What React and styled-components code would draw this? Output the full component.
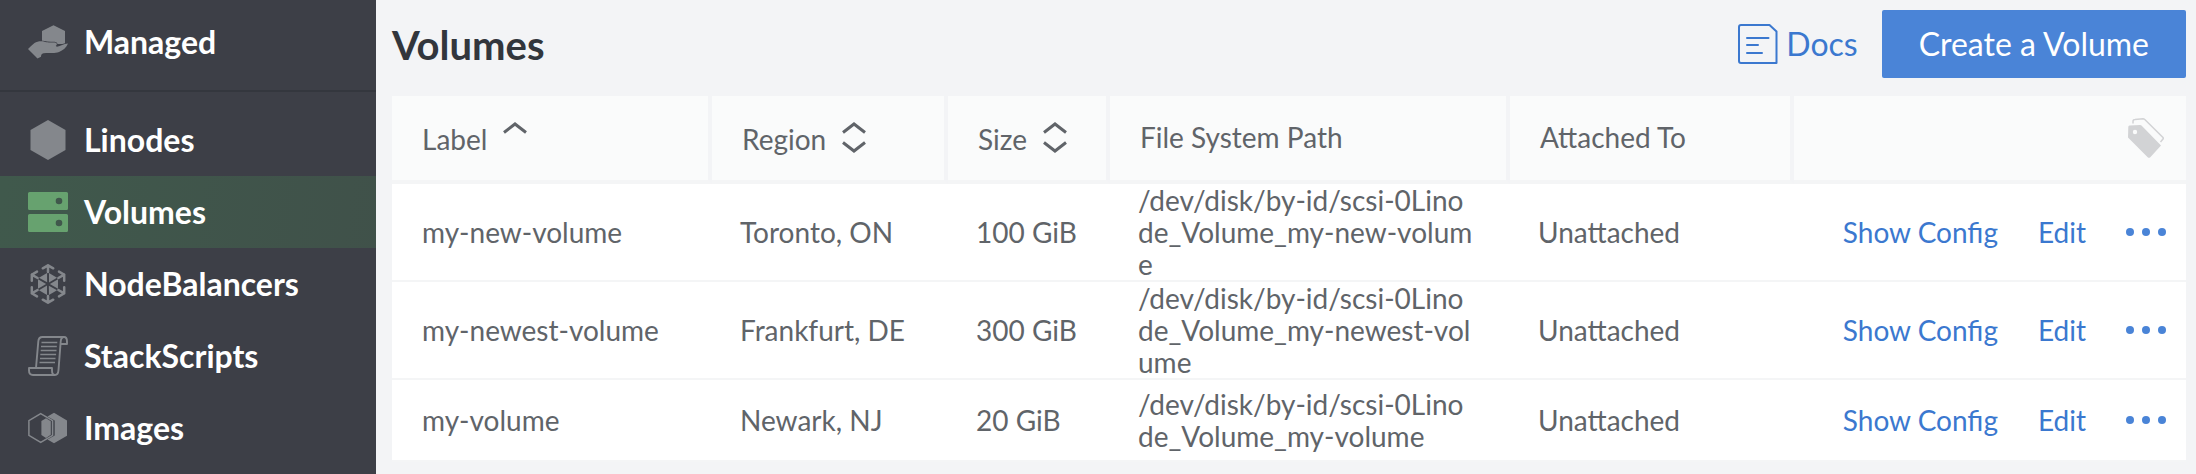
import React from "react";
import styled, { createGlobalStyle, css } from "styled-components";

const GlobalStyle = createGlobalStyle`
  * { box-sizing: border-box; }
  html, body, #root { height: 100%; }
  body {
    margin: 0;
    background: #f3f4f6;
    color: #606469;
    font-family: Lato, "Liberation Sans", sans-serif;
    font-size: 28px;
    line-height: 32px;
  }
  a { color: inherit; text-decoration: none; }
  button {
    margin: 0;
    padding: 0;
    border: 0;
    background: none;
    color: inherit;
    font: inherit;
    cursor: pointer;
  }
`;

const Shell = styled.div`
  display: flex;
  min-height: 100%;
`;

const Sidebar = styled.nav`
  flex: 0 0 376px;
  padding-top: 6px;
  background: #3d3f47;
  color: #fff;
`;

const NavGroup = styled.ul`
  margin: 0;
  padding: 0;
  list-style: none;

  & + & {
    margin-top: 12px;
    padding-top: 12px;
    border-top: 2px solid #34373e;
  }
`;

const NavLink = styled.a`
  display: flex;
  align-items: center;
  gap: 16px;
  height: 72px;
  padding: 0 28px;
  font-size: 32px;
  font-weight: 700;
  line-height: 40px;

  svg {
    flex: none;
    width: 40px;
    height: 40px;
    color: #84878c;
  }

  ${(p) =>
    p.$active &&
    css`
      background: linear-gradient(98deg, #40594c 1%, #404f49 130%);
      svg { color: #67a26f; }
    `}
`;

const Main = styled.main`
  flex: 1;
  min-width: 0;
  padding: 10px 10px 14px 16px;
`;

const PageHeader = styled.header`
  display: flex;
  align-items: center;
  justify-content: space-between;
  margin-bottom: 18px;
`;

const Title = styled.h1`
  margin: 0;
  padding-top: 2px;
  color: #32363c;
  font-size: 40px;
  font-weight: 700;
  line-height: 48px;
`;

const HeaderActions = styled.div`
  display: flex;
  align-items: center;
  gap: 24px;
`;

const DocsLink = styled.a`
  display: flex;
  align-items: center;
  gap: 8px;
  color: #3b78cf;
  font-size: 32px;
  line-height: 40px;

  svg { width: 40px; height: 40px; }
`;

const PrimaryButton = styled.button`
  height: 68px;
  padding: 0 37px;
  border-radius: 2px;
  background: #4a84d7;
  color: #fff;
  font-size: 32px;
  line-height: 40px;
`;

const Table = styled.table`
  width: 100%;
  table-layout: fixed;
  border-collapse: separate;
  border-spacing: 0;
`;

const Col = styled.col`
  width: ${(p) => p.$width};
`;

const HeadCell = styled.th`
  height: 88px;
  padding: 0 30px 2px;
  border-right: ${(p) => (p.$last ? "0" : "4px solid #f3f4f6")};
  border-bottom: 4px solid #f4f5f6;
  background: #fafbfb;
  font-weight: 400;
  text-align: left;

  &:last-child { padding: 0 22px 0 0; }
  & > svg { display: block; margin-left: auto; }
`;

const SortButton = styled.button`
  display: flex;
  align-items: center;
  gap: 15px;
  padding-top: 4px;

  svg { width: 26px; height: 34px; margin-bottom: 4px; }
`;

const Row = styled.tr`
  background: #fff;
`;

const Cell = styled.td`
  height: 82px;
  padding: 0 28px;
  border-bottom: 2px solid #f4f5f6;

  &:first-child { padding-left: 30px; }
  &:last-child { padding-right: 20px; }

  ${(p) =>
    p.$breakAll &&
    css`
      padding-right: 36px;
      word-break: break-all;
    `}
`;

const RowActions = styled.div`
  display: flex;
  align-items: center;
  justify-content: flex-end;
  gap: 40px;
  color: #3b78cf;
  white-space: nowrap;

  svg { display: block; width: 40px; height: 8px; }
`;

const ManagedIcon = () => (
  <svg viewBox="0 0 40 40" fill="currentColor" aria-hidden="true">
    <path d="M25.500 3.300 37 9v13H14V9z" />
    <path
      d="M0 27c2-2 4-4 6.500-6 3-1.800 7-2 10-1.200 4 1.200 7 .5 10 .8 3 .4 2.800 2.600 1.200 3.400l1.300.8c3.500-.6 6.500-3.200 11-3.300-1.500 4-5 7-9 8.500-4.500 1.800-10 .3-15.500 1.300-2 .6-2.500 1.800-2.500 3.500L9.500 36.500z"
      stroke="#3d3f47"
      strokeWidth="1.600"
      paintOrder="stroke"
    />
  </svg>
);

const LinodesIcon = () => (
  <svg viewBox="0 0 40 40" fill="currentColor" aria-hidden="true">
    <path d="M20 0 37.500 10v20L20 40 2.500 30V10z" />
  </svg>
);

const VolumesIcon = () => (
  <svg viewBox="0 0 40 40" fill="currentColor" fillRule="evenodd" aria-hidden="true">
    <path d="M1.500 0h37A1.500 1.500 0 0 1 40 1.500v15a1.500 1.500 0 0 1-1.500 1.500h-37A1.500 1.500 0 0 1 0 16.500v-15A1.500 1.500 0 0 1 1.500 0zM31 5.700a3.300 3.300 0 1 0 0 6.600 3.300 3.300 0 0 0 0-6.600z" />
    <path d="M1.500 22h37a1.500 1.500 0 0 1 1.500 1.500v15a1.500 1.500 0 0 1-1.500 1.500h-37A1.500 1.500 0 0 1 0 38.500v-15A1.500 1.500 0 0 1 1.500 22zM31 27.700a3.300 3.300 0 1 0 0 6.600 3.300 3.300 0 0 0 0-6.600z" />
  </svg>
);

const NodeBalancersIcon = () => (
  <svg viewBox="0 0 40 40" fill="currentColor" aria-hidden="true">
    {[0, 60, 120, 180, 240, 300].map((angle) => (
      <g key={angle} transform={`rotate(${angle} 20 20)`}>
        <path d="M20 1.300V8M14.800 4.300 20 1.300l5.200 3" fill="none" stroke="currentColor" strokeWidth="2.500" strokeLinecap="round" />
        <path d="M21 18.400V9l8 4.700z" />
      </g>
    ))}
  </svg>
);

const StackScriptsIcon = () => (
  <svg viewBox="0 0 40 40" fill="none" stroke="currentColor" strokeWidth="1.900" strokeLinejoin="round" aria-hidden="true">
    <path d="M8 32 10.300 5.500C10.500 2.500 12 1 14.500 1H36c2 0 3 2 3 4.500V8h-6.500" />
    <path d="M36 1c-2.300 0-3.100 2-3.300 4.500L30.500 34c-.2 3-1.200 5-3.500 5s-3-2-3-4.500V32H1v2.500C1 37.500 2 39 5 39h22" />
    <path d="M13.500 6.500h15.800M13 10.500h15.800M12.700 14.500h15.800M12.300 18.500h15.800M12 22.500h15.500M11.500 26.500h15.500" strokeWidth="1.500" />
  </svg>
);

const ImagesIcon = () => (
  <svg viewBox="0 0 40 40" fill="currentColor" aria-hidden="true">
    <path d="M12.700 5.600 24.600 12.600v14.800l-11.900 7-11.800-7V12.600z" fill="none" stroke="currentColor" strokeWidth="1.500" />
    <path d="M18 10.300 22.800 13.200v13.600L18 30l-4.600-3V13z" />
    <path d="M26 4.700 39 12.500v15.300l-13 7.500-6.500-3.800 7.200-4V12.500l-7.200-4z" />
  </svg>
);

const DocsIcon = () => (
  <svg viewBox="0 0 40 40" fill="none" stroke="currentColor" strokeWidth="2" aria-hidden="true">
    <path d="M3 1h28.500L38.500 7.500V39H3a2 2 0 0 1-2-2V3a2 2 0 0 1 2-2z" strokeLinejoin="round" />
    <path d="M9 14h21.500M9 21h11M9 29h15" strokeLinecap="round" />
  </svg>
);

const TagIcon = () => (
  <svg width="36" height="40" viewBox="0 0 36 40" fill="#d2d3d5" role="img" aria-label="Tags">
    <path fillRule="evenodd" d="M1.500 7.600 12 7a2 2 0 0 1 1.500.5L33 27.500 22.300 39.300q-1.300 1-2.600 0L0 19.500 .3 9q0-1.300 1.200-1.400zM7 11.800a2.200 2.200 0 1 0 0 4.400 2.200 2.200 0 0 0 0-4.400z" />
    <path d="M5 5.500V3.500Q5 1.600 7 1.500L15 .8q1 0 1.800.7L35 19.500q.6.800 0 1.600L32.500 24" fill="none" stroke="#d2d3d5" strokeWidth="1.500" />
  </svg>
);

const SortIcon = ({ direction }) => (
  <svg viewBox="0 0 26 34" fill="none" stroke="currentColor" strokeWidth="3" aria-hidden="true">
    <path d="M2 12.500 13 4l11 8.500" />
    {!direction && <path d="M2 22.500 13 31l11-8.500" />}
  </svg>
);

const MoreIcon = () => (
  <svg viewBox="0 0 40 8" fill="#4a84d7" aria-hidden="true">
    <circle cx="4" cy="4" r="4" />
    <circle cx="20" cy="4" r="4" />
    <circle cx="36" cy="4" r="4" />
  </svg>
);

const NAV = [
  [{ label: "Managed", Icon: ManagedIcon }],
  [
    { label: "Linodes", Icon: LinodesIcon },
    { label: "Volumes", Icon: VolumesIcon, active: true },
    { label: "NodeBalancers", Icon: NodeBalancersIcon },
    { label: "StackScripts", Icon: StackScriptsIcon },
    { label: "Images", Icon: ImagesIcon },
  ],
];

const VOLUMES = [
  { label: "my-new-volume", region: "Toronto, ON", size: "100 GiB" },
  { label: "my-newest-volume", region: "Frankfurt, DE", size: "300 GiB" },
  { label: "my-volume", region: "Newark, NJ", size: "20 GiB" },
];

export default function App() {
  return (
    <>
      <GlobalStyle />
      <Shell>
        <Sidebar aria-label="Main">
          {NAV.map((group, i) => (
            <NavGroup key={i}>
              {group.map(({ label, Icon, active }) => (
                <li key={label}>
                  <NavLink href="#" $active={active} aria-current={active ? "page" : undefined}>
                    <Icon />
                    {label}
                  </NavLink>
                </li>
              ))}
            </NavGroup>
          ))}
        </Sidebar>
        <Main>
          <PageHeader>
            <Title>Volumes</Title>
            <HeaderActions>
              <DocsLink href="#">
                <DocsIcon />
                Docs
              </DocsLink>
              <PrimaryButton type="button">Create a Volume</PrimaryButton>
            </HeaderActions>
          </PageHeader>
          <Table>
            <colgroup>
              <Col $width="320px" />
              <Col $width="236px" />
              <Col $width="162px" />
              <Col $width="auto" />
              <Col $width="284px" />
              <Col $width="392px" />
            </colgroup>
            <thead>
              <tr>
                <HeadCell aria-sort="ascending">
                  <SortButton type="button">Label<SortIcon direction="asc" /></SortButton>
                </HeadCell>
                <HeadCell>
                  <SortButton type="button">Region<SortIcon /></SortButton>
                </HeadCell>
                <HeadCell>
                  <SortButton type="button">Size<SortIcon /></SortButton>
                </HeadCell>
                <HeadCell>File System Path</HeadCell>
                <HeadCell>Attached To</HeadCell>
                <HeadCell $last><TagIcon /></HeadCell>
              </tr>
            </thead>
            <tbody>
              {VOLUMES.map(({ label, region, size }) => (
                <Row key={label}>
                  <Cell>{label}</Cell>
                  <Cell>{region}</Cell>
                  <Cell>{size}</Cell>
                  <Cell $breakAll>{`/dev/disk/by-id/scsi-0Linode_Volume_${label}`}</Cell>
                  <Cell>Unattached</Cell>
                  <Cell>
                    <RowActions>
                      <button type="button">Show Config</button>
                      <button type="button">Edit</button>
                      <button type="button" aria-label={`More actions for ${label}`}>
                        <MoreIcon />
                      </button>
                    </RowActions>
                  </Cell>
                </Row>
              ))}
            </tbody>
          </Table>
        </Main>
      </Shell>
    </>
  );
}
